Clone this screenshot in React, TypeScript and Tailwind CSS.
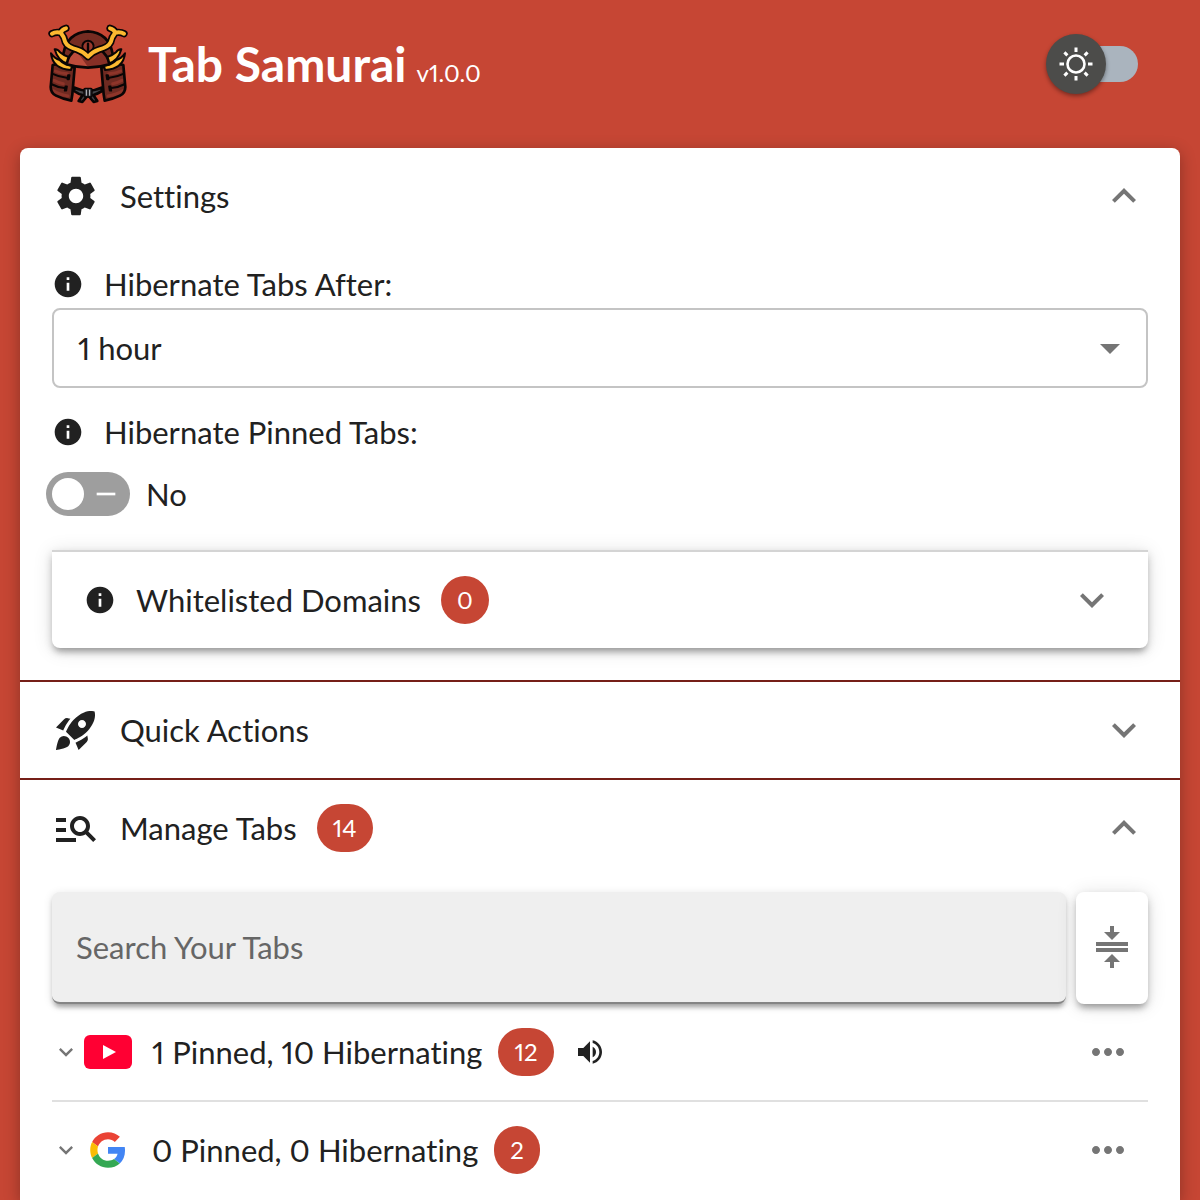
import { useState, type ReactNode } from "react";
import {
  MdArrowDropDown,
  MdCompress,
  MdExpandLess,
  MdExpandMore,
  MdInfo,
  MdManageSearch,
  MdMoreHoriz,
  MdRemove,
  MdRocketLaunch,
  MdSettings,
  MdVolumeUp,
} from "react-icons/md";

// One half of the armour; the other half is its mirror image.
function ArmourHalf() {
  return (
    <g strokeLinejoin="round" strokeLinecap="round">
      <path d="M38 150 L32 216 Q32 234 48 242 Q68 252 94 257 L97 238 L104 158 L62 145Z" fill="#6f2a21" />
      <path d="M42 196 Q55 203 70 206 M40 227 Q54 237 84 243 M46 168 Q60 175 82 176" fill="none" stroke="#8e352a" strokeWidth="9" />
      <g stroke="#0a0505" strokeWidth="8">
        <path d="M38 150 L32 216 Q32 234 48 242 Q68 252 94 257 L97 238 L104 158 L62 145Z" fill="none" />
        <path d="M36 176 Q56 186 80 188 M33 207 Q52 217 74 219" fill="none" strokeWidth="6" />
        <path d="M84 180 h5 l-2 13 h-5Z M76 214 h5 l-2 13 h-5Z" fill="#c4c7cf" strokeWidth="5" />
        <path d="M44 103 Q54 102 60 112 Q70 121 86 126 L84 146 Q54 140 44 103Z" fill="#fcb930" strokeWidth="6" />
        <path d="M33 115 Q44 130 59 135 Q72 149 96 152 L93 165 Q38 162 33 115Z" fill="#fcb930" strokeWidth="6" />
      </g>
    </g>
  );
}

const antlers = "M36 56 Q46 50 62 53 Q66 43 78 40 M62 53 Q73 66 76 82 Q82 96 112 104 Q130 110 144 125 Q158 110 176 104 Q206 96 212 82 Q215 66 226 53 M210 40 Q222 43 226 53 Q242 50 252 56";

function SamuraiLogo() {
  return (
    <svg viewBox="24 27 240 240" className="size-20 shrink-0" aria-hidden="true">
      <g stroke="#0a0505" strokeWidth="8" strokeLinejoin="round" strokeLinecap="round">
        <path d="M104 218 Q122 227 144 227 Q166 227 184 218 L186 228 Q170 238 160 240 L172 258 L161 261 L146 243 L142 243 L127 261 L116 258 L128 240 Q116 238 102 228Z" fill="#46464a" />
        <path d="M70 116 Q82 53 144 49 Q206 53 218 116 L208 144 L80 144Z" fill="#762c22" />
      </g>
      <ArmourHalf />
      <g transform="matrix(-1 0 0 1 288 0)">
        <ArmourHalf />
      </g>
      <path d="M80 148 Q84 120 108 103 L180 103 Q204 120 208 148 Q176 158 144 158 Q112 158 80 148Z" fill="#872f26" />
      <path d="M82 147 Q86 122 108 106 L144 156 Q108 157 82 147Z" fill="#bd4c3b" />
      <g stroke="#0a0505" strokeWidth="8" strokeLinejoin="round" strokeLinecap="round" fill="none">
        <path d="M80 148 Q84 120 108 103 L180 103 Q204 120 208 148 Q176 158 144 158 Q112 158 80 148Z" />
        <path d="M128 100 A17 17 0 1 1 160 100 L144 120Z" fill="#9b3a2d" strokeWidth="6" />
        <path d={antlers} strokeWidth="22" />
        <path d={antlers} stroke="#fcb930" strokeWidth="12" />
        <path d="M144 86 V112" strokeWidth="7" />
        <rect x="132" y="220" width="24" height="26" rx="3" fill="#25262b" strokeWidth="4" />
        <path d="M139 225v16 M149 225v16" stroke="#c8cbd2" strokeWidth="3" />
      </g>
    </svg>
  );
}

function YouTubeIcon() {
  return (
    <svg viewBox="0 0 48 48" className="size-12 shrink-0" aria-hidden="true">
      <rect y="7" width="48" height="34" rx="6" fill="#ff0033" />
      <path d="M19 17 L32 24 L19 31Z" fill="#fff" />
    </svg>
  );
}

function GoogleIcon() {
  return (
    <svg viewBox="-3 -3 54 54" className="size-12 shrink-0 p-1" aria-hidden="true">
      <path fill="#EA4335" d="M24 9.5c3.54 0 6.71 1.22 9.21 3.6l6.85-6.85C35.9 2.38 30.47 0 24 0 14.62 0 6.51 5.38 2.56 13.22l7.98 6.19C12.43 13.72 17.74 9.5 24 9.5z" />
      <path fill="#4285F4" d="M46.98 24.55c0-1.57-.15-3.09-.38-4.55H24v9.02h12.94c-.58 2.96-2.26 5.48-4.78 7.18l7.73 6c4.51-4.18 7.09-10.36 7.09-17.65z" />
      <path fill="#FBBC05" d="M10.53 28.59c-.48-1.45-.76-2.99-.76-4.59s.27-3.14.76-4.59l-7.98-6.19C.92 16.46 0 20.12 0 24c0 3.88.92 7.54 2.56 10.78l7.97-6.19z" />
      <path fill="#34A853" d="M24 48c6.48 0 11.93-2.13 15.89-5.81l-7.73-6c-2.15 1.45-4.92 2.3-8.16 2.3-6.26 0-11.57-4.22-13.47-9.91l-7.98 6.19C6.51 42.62 14.62 48 24 48z" />
    </svg>
  );
}

function SunIcon() {
  return (
    <svg viewBox="0 0 40 40" className="size-10" fill="none" stroke="#fff" aria-hidden="true">
      <circle cx="20" cy="20" r="8.5" strokeWidth="2.6" />
      <path
        strokeWidth="3"
        d="M20 3.5v4.5M20 32v4.5M3.5 20H8M32 20h4.5M8.4 8.4l3 3M28.6 28.6l3 3M8.4 31.6l3-3M28.6 11.4l3-3"
      />
    </svg>
  );
}

function Badge({ children }: { children: ReactNode }) {
  return (
    <span className="flex h-12 shrink-0 items-center rounded-3xl bg-[#c64634] px-4 text-2xl text-white">
      {children}
    </span>
  );
}

type SectionProps = {
  icon: ReactNode;
  title: string;
  badge?: number;
  initiallyOpen?: boolean;
  children?: ReactNode;
};

function Section({ icon, title, badge, initiallyOpen = false, children }: SectionProps) {
  const [open, setOpen] = useState(initiallyOpen);
  return (
    <section className="border-t-2 border-[#751f18] first:border-t-0">
      <button
        type="button"
        aria-expanded={open}
        onClick={() => setOpen(!open)}
        className="flex h-24 w-full items-center gap-5 px-8 text-left"
      >
        {icon}
        <span>{title}</span>
        {badge !== undefined && <Badge>{badge}</Badge>}
        <span className="ml-auto text-[#757575]">
          {open ? <MdExpandLess className="size-12" /> : <MdExpandMore className="size-12" />}
        </span>
      </button>
      {open && children}
    </section>
  );
}

type TabGroupProps = { icon: ReactNode; label: string; count: number; playing?: boolean };

function TabGroup({ icon, label, count, playing }: TabGroupProps) {
  return (
    <li className="flex h-24 items-center border-[#e0e0e0] not-first:box-content not-first:border-t-2">
      <button type="button" aria-label="Show tabs" className="mr-1 text-[#757575]">
        <MdExpandMore className="size-7" />
      </button>
      {icon}
      <span className="mr-4 ml-5">{label}</span>
      <Badge>{count}</Badge>
      {playing && <MdVolumeUp className="ml-5 size-8" />}
      <button type="button" aria-label="More actions" className="mr-4 ml-auto text-[#757575]">
        <MdMoreHoriz className="size-12" />
      </button>
    </li>
  );
}

const raised = "shadow-[0_6px_4px_-4px_rgba(0,0,0,0.2),0_4px_4px_rgba(0,0,0,0.14),0_2px_10px_rgba(0,0,0,0.12)]";
const raisedHigh = "shadow-[0_6px_6px_-3px_rgba(0,0,0,0.25),0_4px_8px_rgba(0,0,0,0.16),0_2px_20px_rgba(0,0,0,0.12)]";

export default function App() {
  return (
    <div className="flex min-h-screen flex-col bg-[#c64634] px-5 font-['Lato',sans-serif] text-[31px] leading-12 text-[#212121] proportional-nums [font-variant-ligatures:none]">
      <header className="flex h-37 items-center px-7 pb-5">
        <SamuraiLogo />
        <h1 className="ml-5 flex items-baseline gap-2.5 text-white">
          <span className="text-5xl font-bold">Tab Samurai</span>
          <span className="text-2xl">v1.0.0</span>
        </h1>
        <button
          type="button"
          role="switch"
          aria-checked="false"
          aria-label="Dark theme"
          className="mr-3.5 ml-auto flex h-9 w-22 items-center rounded-full bg-[#aab4be]"
        >
          <span className="-ml-1 flex size-15 shrink-0 items-center justify-center rounded-full bg-[#4c4c4a] shadow-[0_2px_4px_rgba(0,0,0,0.4)]">
            <SunIcon />
          </span>
        </button>
      </header>

      <main className="flex-1 rounded-t-lg bg-white shadow-[0_4px_16px_rgba(0,0,0,0.3)]">
        <Section icon={<MdSettings className="size-12" />} title="Settings" initiallyOpen>
          <div className="px-8 pt-4 pb-8">
            <label htmlFor="hibernate-after" className="flex items-center gap-5">
              <MdInfo className="size-8" />
              Hibernate Tabs After:
            </label>
            <div className="relative">
              <select
                id="hibernate-after"
                className="h-20 w-full appearance-none rounded-lg border-2 border-[#c4c4c4] bg-white px-6"
              >
                <option>1 hour</option>
              </select>
              <MdArrowDropDown className="pointer-events-none absolute top-4 right-3.5 size-12 text-[#757575]" />
            </div>
            <div className="mt-5 flex items-center gap-5">
              <MdInfo className="size-8" />
              <span id="pinned-label">Hibernate Pinned Tabs:</span>
            </div>
            <div className="mt-3.5 -ml-1.5 flex items-center gap-4">
              <button
                type="button"
                role="switch"
                aria-checked="false"
                aria-labelledby="pinned-label"
                className="flex h-11 w-21 items-center justify-between rounded-full bg-[#9e9e9e] pr-2 pl-1.5 text-white"
              >
                <span className="size-8 rounded-full bg-white" />
                <MdRemove className="size-8" />
              </button>
              No
            </div>
            <div className={`mt-8 rounded-b-lg border-t-2 border-[#d4d4d4] bg-white ${raisedHigh}`}>
              <button type="button" aria-expanded="false" className="flex h-24 w-full items-center gap-5 px-8 text-left">
                <MdInfo className="size-8" />
                <span>Whitelisted Domains</span>
                <Badge>0</Badge>
                <MdExpandMore className="ml-auto size-12 text-[#757575]" />
              </button>
            </div>
          </div>
        </Section>

        <Section icon={<MdRocketLaunch className="size-12" />} title="Quick Actions" />

        <Section icon={<MdManageSearch className="size-12" />} title="Manage Tabs" badge={14} initiallyOpen>
          <div className="px-8 pt-4">
            <div className="flex gap-2.5">
              <input
                type="search"
                aria-label="Search Your Tabs"
                placeholder="Search Your Tabs"
                className={`h-28 min-w-0 flex-1 rounded-lg border-b-2 border-[#858585] bg-[#efefef] px-6 placeholder:text-[#666] ${raised}`}
              />
              <button
                type="button"
                aria-label="Collapse all"
                className={`flex w-18 items-center justify-center rounded-lg bg-white text-[#757575] ${raisedHigh}`}
              >
                <MdCompress className="size-12" />
              </button>
            </div>
            <ul>
              <TabGroup icon={<YouTubeIcon />} label="1 Pinned, 10 Hibernating" count={12} playing />
              <TabGroup icon={<GoogleIcon />} label="0 Pinned, 0 Hibernating" count={2} />
            </ul>
          </div>
        </Section>
      </main>
    </div>
  );
}
